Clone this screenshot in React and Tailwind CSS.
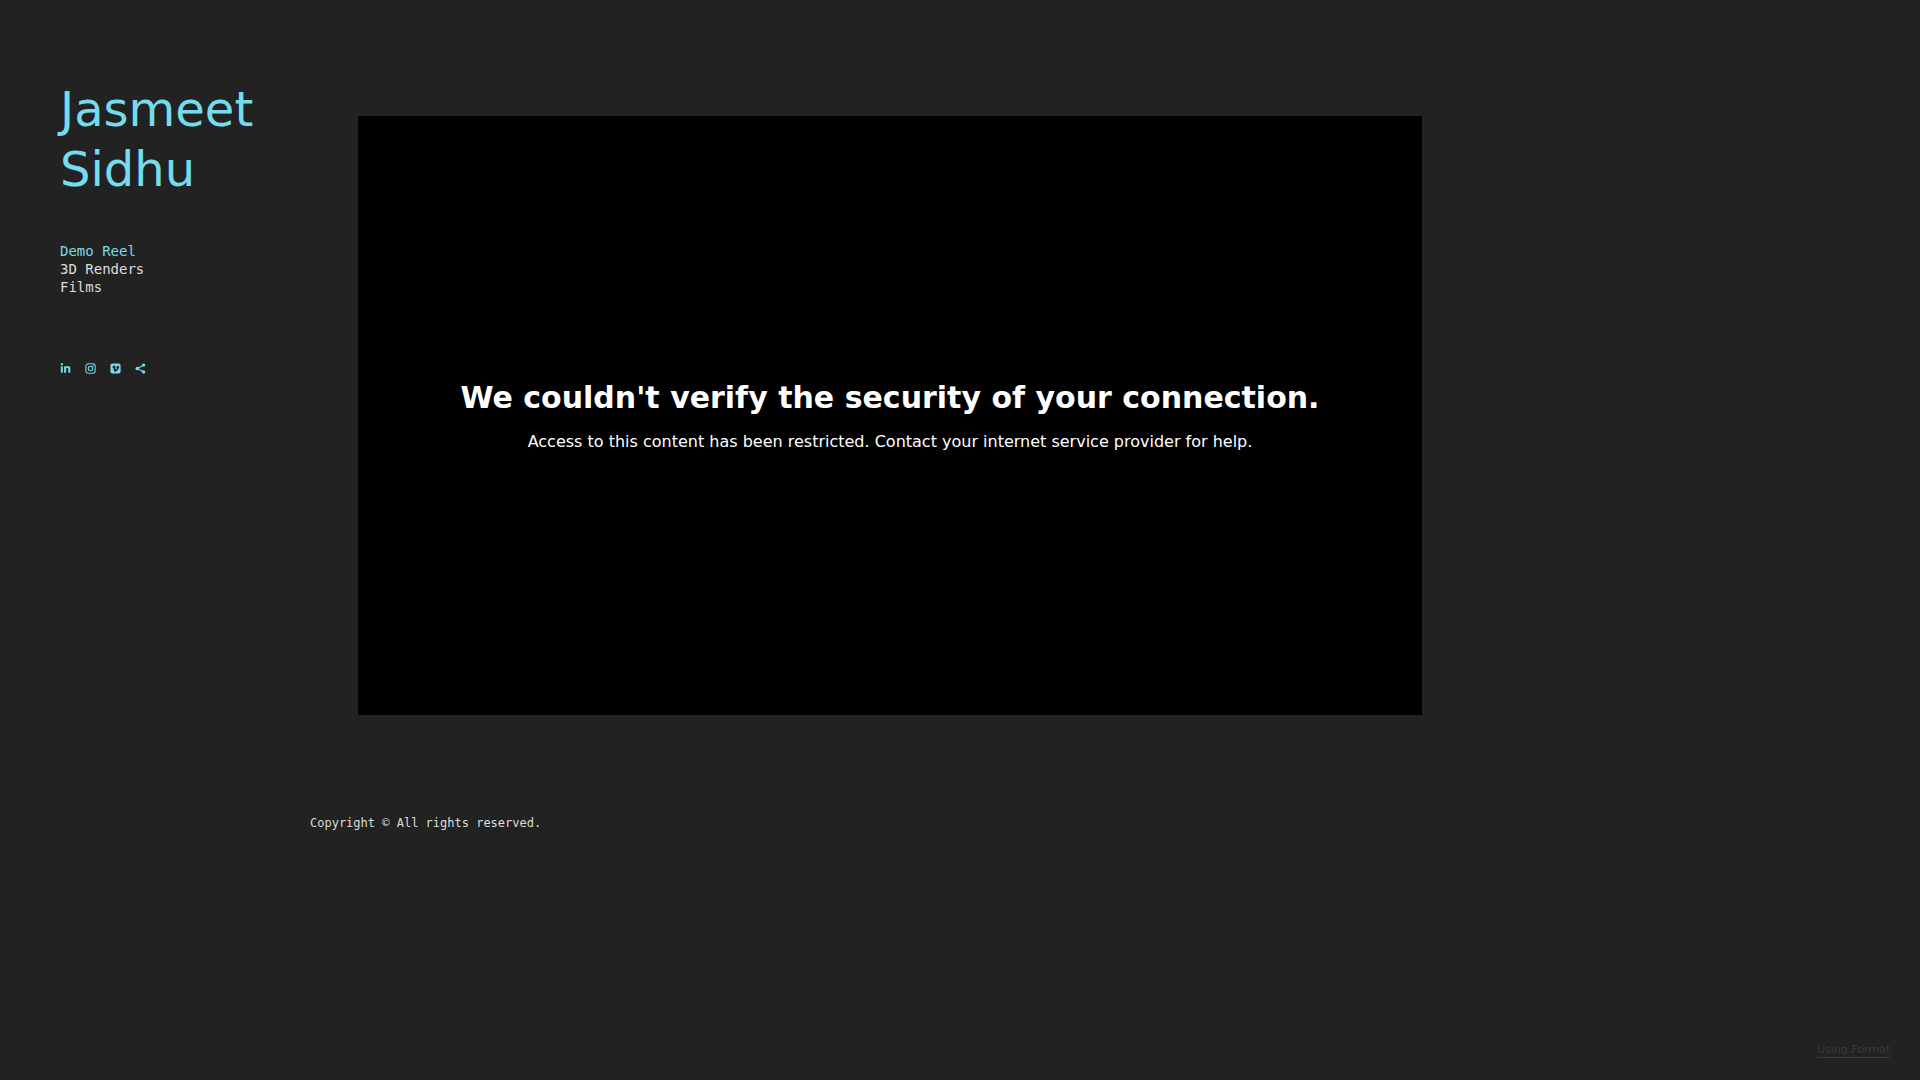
import { FaLinkedinIn } from "react-icons/fa";

const navLinks = [
  { label: "Demo Reel", active: true },
  { label: "3D Renders", active: false },
  { label: "Films", active: false },
];

const socialLinks = [
  { label: "LinkedIn", Icon: FaLinkedinIn },
  { label: "Instagram", Icon: InstagramIcon },
  { label: "Vimeo", Icon: VimeoIcon },
];

function InstagramIcon({ className }) {
  return (
    <svg viewBox="0 0 22 22" fill="none" stroke="currentColor" className={className}>
      <rect x="1.6" y="1.6" width="18.8" height="18.8" rx="5" strokeWidth="2.1" />
      <circle cx="11" cy="11" r="4.4" strokeWidth="2.2" />
      <circle cx="16.2" cy="5.8" r="1.4" fill="currentColor" stroke="none" />
    </svg>
  );
}

// Dark "v" mark on a rounded tile
function VimeoIcon({ className }) {
  return (
    <svg viewBox="0 0 22 22" className={className}>
      <rect x="0.8" y="0.8" width="20.4" height="20.4" rx="4" fill="currentColor" />
      <path
        d="M4.2 8.2 8 5.2c1.6-.8 2.4.4 2.7 2.2l.8 4.6c.5 1.8 1 1.6 1.8.2.9-1.5 1.1-2.6-.8-2.2.7-3 2.4-4.6 4.4-4.4 1.6.2 1.9 1.8 1.1 3.9-1.2 3-3.6 6.2-6 7.7-1.9 1-3.200.3-3.900-1.800L6.600 9.700c-.3-.9-.7-.7-1.500-.2z"
        fill="#222222"
      />
    </svg>
  );
}

function ShareIcon({ className }) {
  return (
    <svg viewBox="0 0 22 22" fill="currentColor" className={className}>
      <path d="M17 4.4 4.5 11 17 17.6" fill="none" stroke="currentColor" strokeWidth="2.4" />
      <circle cx="4.5" cy="11" r="3.6" />
      <circle cx="17.2" cy="4.2" r="3.4" />
      <circle cx="17.2" cy="17.8" r="3.4" />
    </svg>
  );
}

function Sidebar() {
  return (
    <header className="w-[310px] shrink-0 pt-[79px] pl-[60px] text-[#74dcec]">
      <h1 className="font-['DejaVu_Sans',sans-serif] text-[48px] leading-[60px]">
        <a href="#">
          Jasmeet
          <br />
          Sidhu
        </a>
      </h1>

      <nav className="mt-[43px]">
        <ul className="text-sm leading-[18px]">
          {navLinks.map(({ label, active }) => (
            <li key={label}>
              <a href="#" className={active ? "text-[#74dcec]" : "text-[#dddddd]"}>
                {label}
              </a>
            </li>
          ))}
        </ul>
      </nav>

      <div className="mt-[67px] flex items-center gap-[14px]">
        {socialLinks.map(({ label, Icon }) => (
          <a key={label} href="#" aria-label={label}>
            <Icon className="block size-[11px]" />
          </a>
        ))}
        <button type="button" aria-label="Share" className="cursor-pointer">
          <ShareIcon className="block size-[11px]" />
        </button>
      </div>
    </header>
  );
}

function VideoMessage() {
  return (
    <section className="flex aspect-video w-full max-w-[1064px] flex-col items-center justify-center bg-black px-8 pt-0.5 text-center font-['DejaVu_Sans',sans-serif] text-white">
      <h2 className="text-[30px] leading-10 font-bold">
        We couldn't verify the security of your connection.
      </h2>
      <p className="mt-3 text-base leading-6">
        Access to this content has been restricted. Contact your internet
        service provider for help.
      </p>
    </section>
  );
}

function App() {
  return (
    <div className="flex min-h-screen bg-[#222222] font-['DejaVu_Sans_Mono',monospace] text-[#dddddd]">
      <Sidebar />

      <div className="flex min-w-0 grow flex-col">
        <main className="px-12 pt-[116px]">
          <VideoMessage />
        </main>

        <footer className="flex grow flex-col justify-between pt-[100px]">
          <p className="text-xs leading-4">Copyright © All rights reserved.</p>
          <a
            href="#"
            className="mr-[30px] mb-[22px] self-end border-b border-[#3b3b3b] font-['DejaVu_Sans',sans-serif] text-[11px] leading-[14px] text-[#3b3b3b]"
          >
            Using Format
          </a>
        </footer>
      </div>
    </div>
  );
}

export default App;
